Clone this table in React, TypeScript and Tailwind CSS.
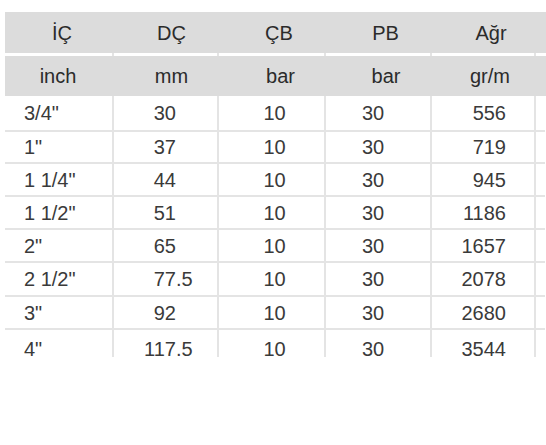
const cols = ['w-[109px]', 'w-[105px]', 'w-[107px]', 'w-[106px]', 'w-[104px]'];

const headTop = [
  { label: 'İÇ', pad: 'pl-[5px]' },
  { label: 'DÇ', pad: 'pl-[10px]' },
  { label: 'ÇB', pad: 'pl-[13px]' },
  { label: 'PB', pad: 'pl-[13px]' },
  { label: 'Ağr', pad: 'pl-[14px]' },
];

const headUnits = [
  { label: 'inch', pad: 'pr-[3px]' },
  { label: 'mm', pad: 'pl-[10px]' },
  { label: 'bar', pad: 'pl-[16px]' },
  { label: 'bar', pad: 'pl-[14px]' },
  { label: 'gr/m', pad: 'pl-[12px]' },
];

const rows = [
  { ic: '3/4"', dc: '30', dec: '', agr: '556', h: 'h-[36px]' },
  { ic: '1"', dc: '37', dec: '', agr: '719', h: 'h-[32px]' },
  { ic: '1 1/4"', dc: '44', dec: '', agr: '945', h: 'h-[33px]' },
  { ic: '1 1/2"', dc: '51', dec: '', agr: '1186', h: 'h-[33px]' },
  { ic: '2"', dc: '65', dec: '', agr: '1657', h: 'h-[33px]' },
  { ic: '2 1/2"', dc: '77', dec: '.5', agr: '2078', h: 'h-[34px]' },
  { ic: '3"', dc: '92', dec: '', agr: '2680', h: 'h-[33px]' },
  { ic: '4"', dc: '117', dec: '.5', agr: '3544', h: 'h-[27px]' },
];

function HeaderRow({ cells, h }: { cells: { label: string; pad: string }[]; h: string }) {
  return (
    <div className={`flex ${h} bg-[#dcdcdc] text-[#2b2b2b]`}>
      {cells.map((c, i) => (
        <div key={i} className={`${cols[i]} ${c.pad} shrink-0 flex items-center justify-center`}>
          {c.label}
        </div>
      ))}
      <div className="flex-1" />
    </div>
  );
}

export default function App() {
  return (
    <div
      className="w-[546px] h-[445px] overflow-hidden bg-white pt-[12px] pl-[5px] text-[20px]"
      style={{ fontFamily: '"Liberation Sans", Arial, sans-serif' }}
    >
      <HeaderRow cells={headTop} h="h-[41px]" />
      <div className="flex h-[3px]">
        {cols.map((w, i) => (
          <div key={i} className={`${w} shrink-0 border-r-2 border-[#e4e4e4]`} />
        ))}
      </div>
      <HeaderRow cells={headUnits} h="h-[40px]" />

      {rows.map((r, idx) => {
        const last = idx === rows.length - 1;
        const line = last ? '' : 'border-b-2';
        const align = last ? 'items-start pt-[4px]' : 'items-center';
        const cell = `shrink-0 flex ${align} border-r-2 ${line} border-[#e4e4e4]`;
        return (
          <div key={idx} className={`flex ${r.h} text-[#3a3a3a]`}>
            <div className={`${cols[0]} ${cell} pl-[19px]`}>{r.ic}</div>
            <div className={`${cols[1]} ${cell}`}>
              <span className="inline-block w-[62px] text-right">{r.dc}</span>
              <span>{r.dec}</span>
            </div>
            <div className={`${cols[2]} ${cell} justify-center pl-[6px]`}>10</div>
            <div className={`${cols[3]} ${cell} justify-center pr-[10px]`}>30</div>
            <div className={`${cols[4]} ${cell} justify-end pr-[28px]`}>{r.agr}</div>
            <div className={`flex-1 ${line} border-[#e4e4e4] mr-px`} />
          </div>
        );
      })}
    </div>
  );
}
